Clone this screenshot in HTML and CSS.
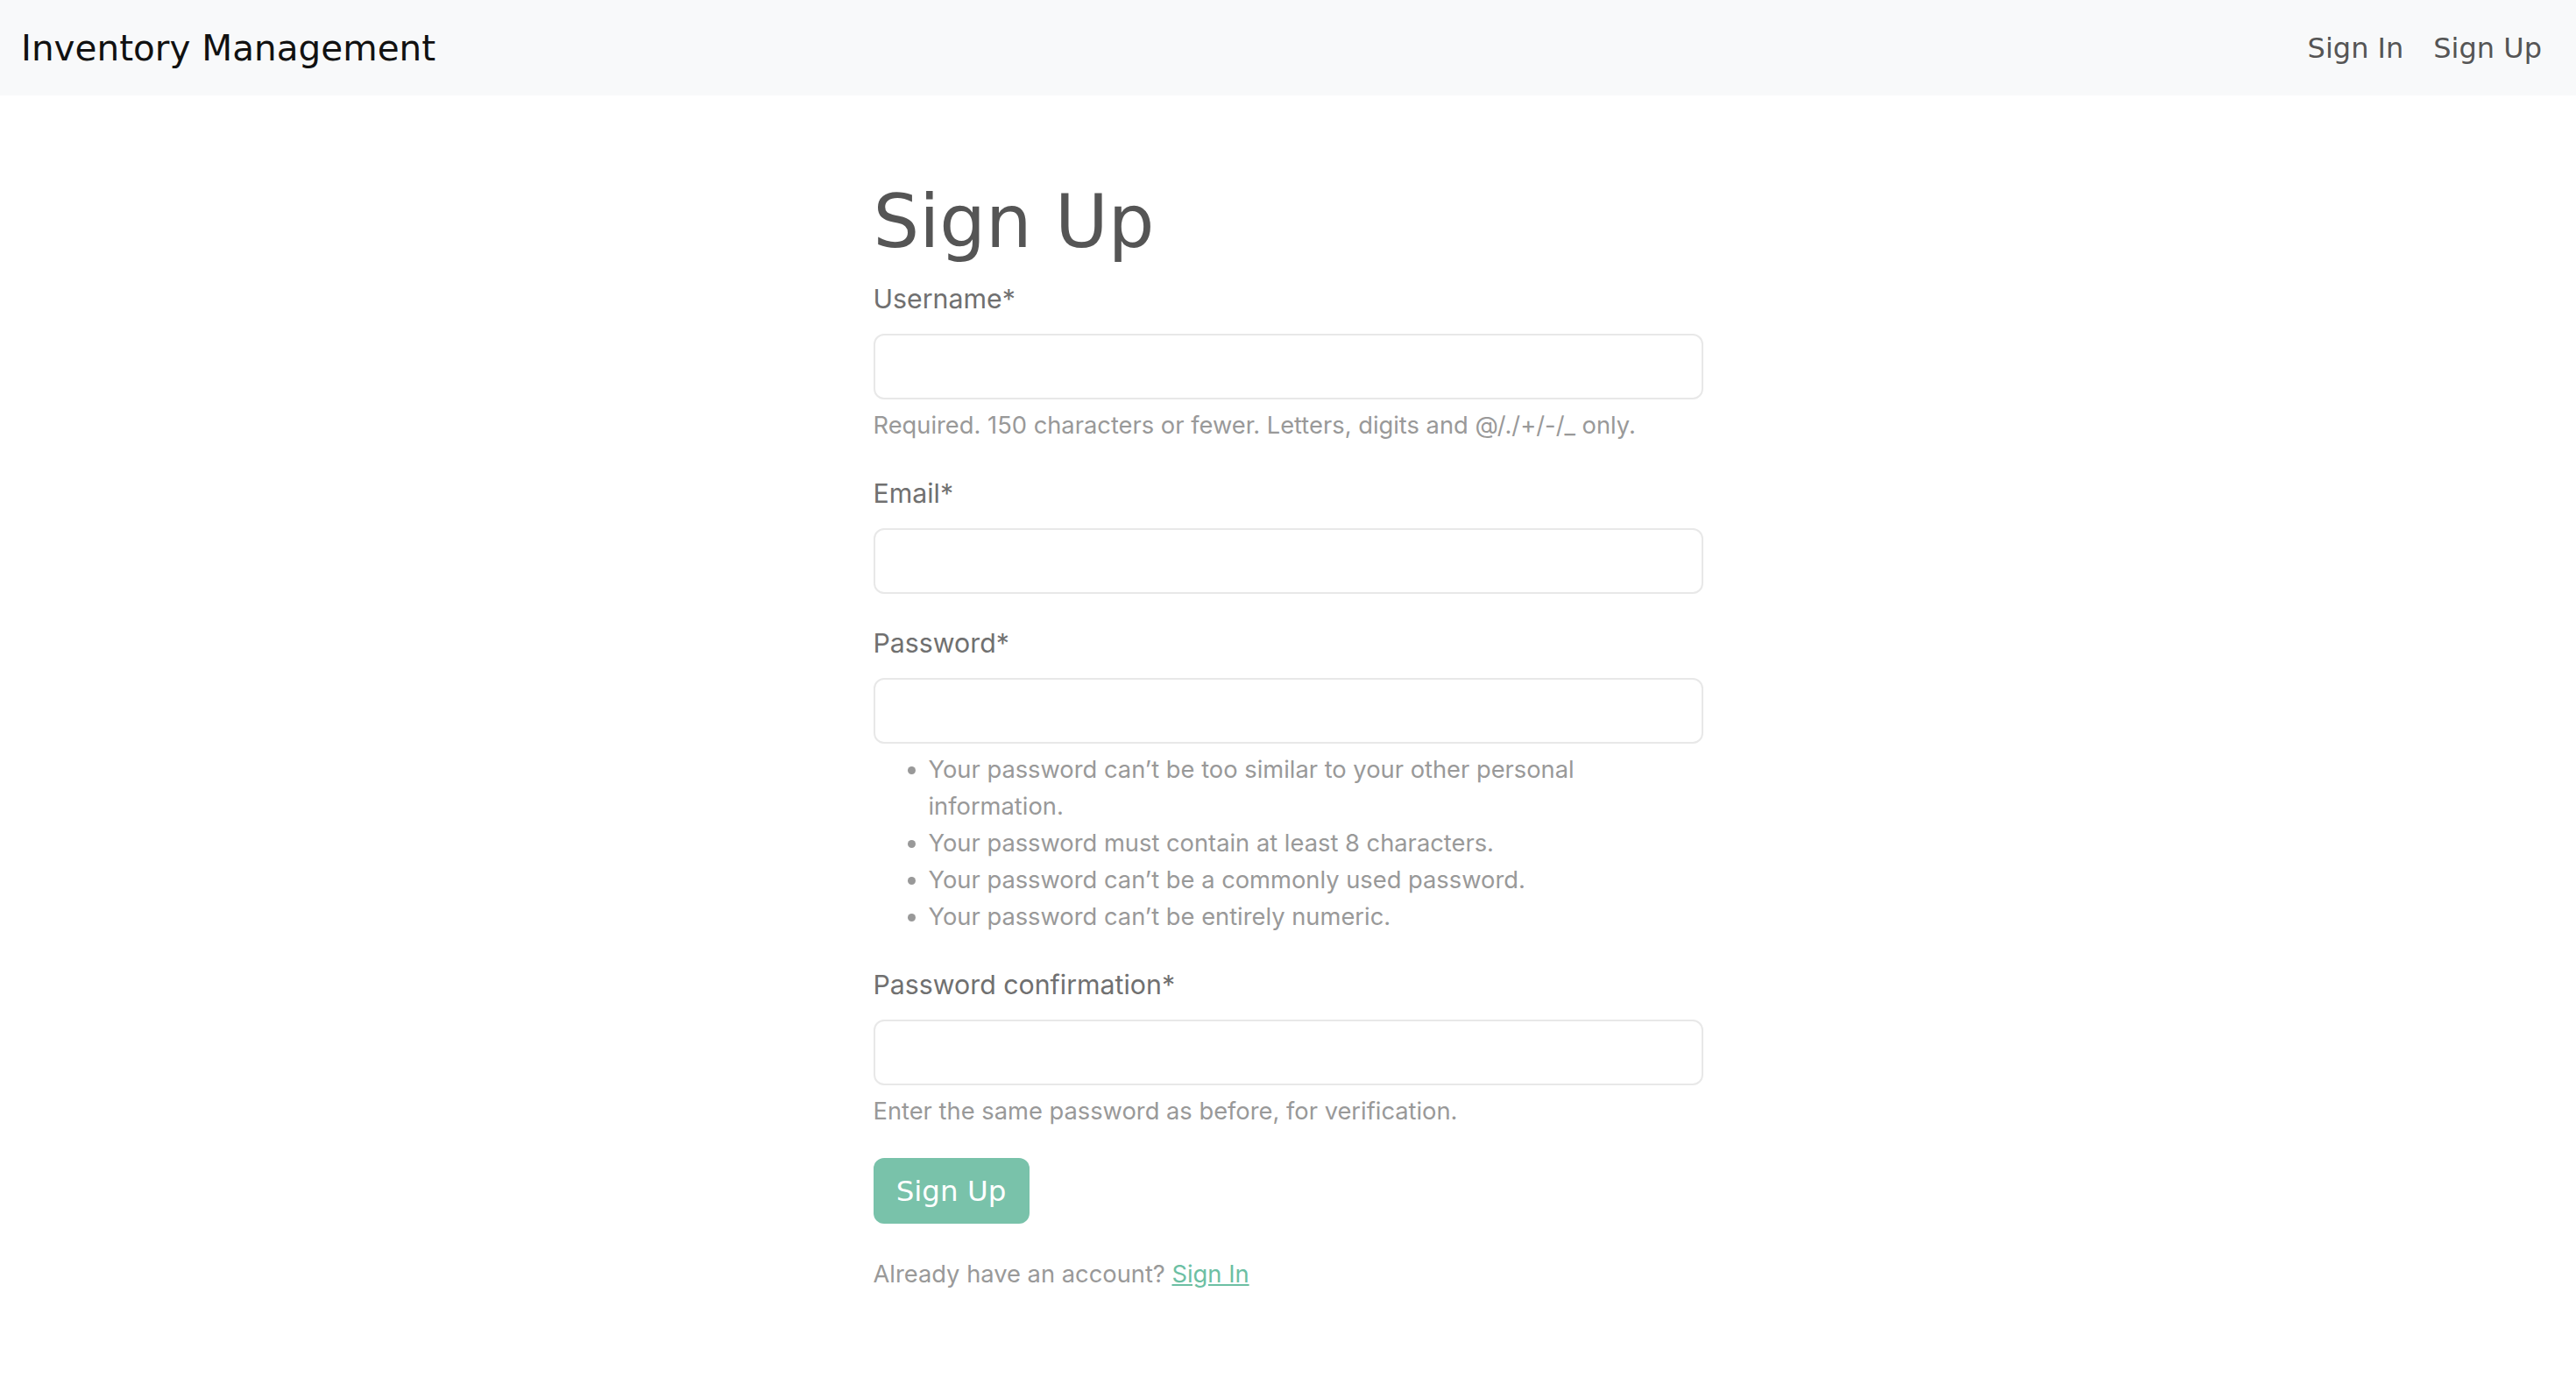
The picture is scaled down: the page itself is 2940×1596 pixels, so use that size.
FILE: index.html
```html
<!DOCTYPE html>
<html lang="en">
<head>
<meta charset="utf-8">
<title>Sign Up</title>
<link rel="stylesheet" href="styles.css">
</head>
<body>
<nav class="navbar">
  <a class="brand" href="#">Inventory Management</a>
  <div class="nav-links">
    <a class="nav-link" href="#">Sign In</a>
    <a class="nav-link" href="#">Sign Up</a>
  </div>
</nav>
<main class="container">
  <h1 class="title">Sign Up</h1>
  <form class="form">
    <div class="field">
      <label class="label">Username*</label>
      <input class="input" type="text">
      <div class="help">Required. 150 characters or fewer. Letters, digits and @/./+/-/_ only.</div>
    </div>
    <div class="field">
      <label class="label">Email*</label>
      <input class="input" type="email">
    </div>
    <div class="field">
      <label class="label">Password*</label>
      <input class="input" type="password">
      <ul class="help help-list">
        <li>Your password can’t be too similar to your other personal information.</li>
        <li>Your password must contain at least 8 characters.</li>
        <li>Your password can’t be a commonly used password.</li>
        <li>Your password can’t be entirely numeric.</li>
      </ul>
    </div>
    <div class="field field-last">
      <label class="label">Password confirmation*</label>
      <input class="input" type="password">
      <div class="help">Enter the same password as before, for verification.</div>
    </div>
    <button class="btn" type="button">Sign Up</button>
  </form>
  <p class="alt">Already have an account? <a class="alt-link" href="#">Sign In</a></p>
</main>
</body>
</html>
```

FILE: styles.css
```css
html, body { margin: 0; padding: 0; background: #fff; }
body { font-family: Inter, "Noto Sans", sans-serif; color: #6e6e6e; }

.navbar {
  height: 109px;
  background: #f8f9fa;
  display: flex;
  align-items: center;
  justify-content: space-between;
  padding: 0 39px 0 24px;
}
.brand {
  font-family: "DejaVu Sans", sans-serif;
  font-size: 40.5px;
  color: #111;
  text-decoration: none;
}
.nav-links { display: flex; gap: 34px; }
.nav-link {
  font-family: "DejaVu Sans", sans-serif;
  font-size: 32px;
  color: #555;
  text-decoration: none;
}

.container { width: 947px; margin: 0 auto; padding-top: 92px; }
.title {
  font-family: "DejaVu Sans", sans-serif;
  font-weight: 400;
  font-size: 83px;
  line-height: 106px;
  color: #555;
  margin: 0 0 14px;
}
.form { display: flex; flex-direction: column; align-items: flex-start; }
.field { display: flex; flex-direction: column; width: 100%; margin-bottom: 36px; }
.field-last { margin-bottom: 32px; }
.label { font-size: 30.3px; line-height: 40px; margin-bottom: 20px; color: #707070; }
.input {
  box-sizing: border-box;
  height: 75px;
  width: 100%;
  border: 2px solid #e8e8e8;
  border-radius: 12px;
  background: #fff;
  margin: 0;
}
.help { font-size: 27.3px; line-height: 42px; color: #999; margin-top: 9px; }
.help-list { margin: 9px 0 0; padding-left: 63px; }
.btn {
  height: 75px;
  width: 178px;
  border: none;
  border-radius: 12px;
  background: #79c2aa;
  color: #fff;
  font-family: "DejaVu Sans", sans-serif;
  font-size: 32.5px;
  padding: 0;
}
.alt { font-size: 27.3px; line-height: 42px; color: #999; margin: 37px 0 0; }
.alt-link { color: #6cbfa3; }
```
